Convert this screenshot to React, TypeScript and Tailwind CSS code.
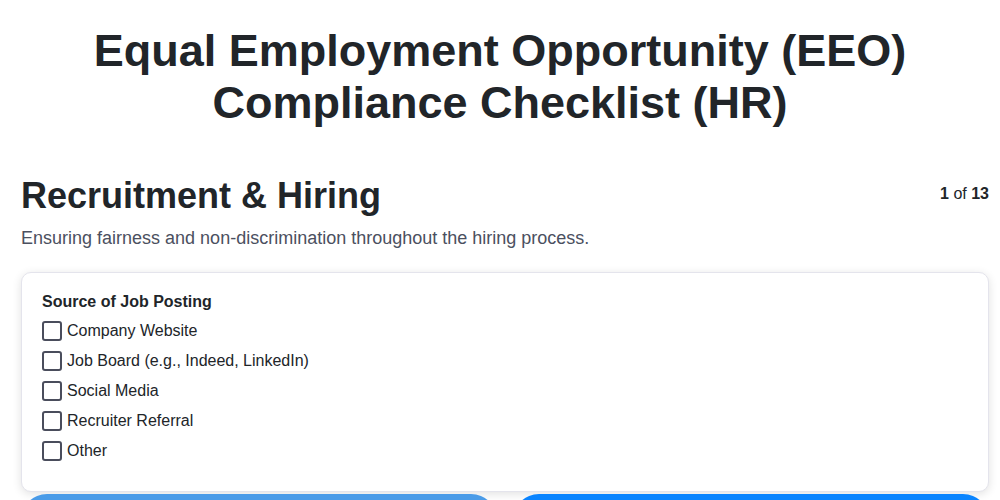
import { useState } from "react";

const sources = [
  "Company Website",
  "Job Board (e.g., Indeed, LinkedIn)",
  "Social Media",
  "Recruiter Referral",
  "Other",
];

export default function App() {
  const [checked, setChecked] = useState<string[]>([]);

  const toggle = (item: string) =>
    setChecked((prev) =>
      prev.includes(item) ? prev.filter((i) => i !== item) : [...prev, item]
    );

  return (
    <div className="h-screen overflow-hidden bg-white font-['Liberation_Sans',Arial,sans-serif] text-[#212529]">
      <h1 className="px-[21px] pt-[25px] text-center text-[45px] font-bold leading-[52px]">
        Equal Employment Opportunity (EEO)
        <br />
        Compliance Checklist (HR)
      </h1>

      <div className="pl-[21px] pr-[11px]">
        <div className="mt-[45px] flex items-start justify-between">
          <h2 className="text-[36px] font-bold leading-[44px]">Recruitment &amp; Hiring</h2>
          <p className="mt-[8px] text-[16px]">
            <span className="font-bold">1</span> of <span className="font-bold">13</span>
          </p>
        </div>
        <p className="mt-[8px] text-[18px] leading-[24px] text-[#4b5060]">
          Ensuring fairness and non-discrimination throughout the hiring process.
        </p>

        <div className="mt-[22px] rounded-[10px] border border-[#e4e4ec] bg-white px-[20px] pb-[30px] pt-[19px] shadow-[0_2px_10px_rgba(0,0,0,0.12)]">
          <p className="text-[16px] font-bold leading-[20px]">Source of Job Posting</p>
          <div className="mt-[9px] flex flex-col gap-[10px]">
            {sources.map((s) => (
              <label key={s} className="flex cursor-pointer items-center gap-[5px] text-[16px] leading-[20px]">
                <span
                  onClick={() => toggle(s)}
                  className={`flex h-[20px] w-[20px] items-center justify-center rounded-[3px] border-2 border-[#4a4d5c] ${
                    checked.includes(s) ? "bg-[#0a84ff]" : "bg-white"
                  }`}
                />
                <span>{s}</span>
              </label>
            ))}
          </div>
        </div>

        <div className="mt-[2px] flex gap-[16px]">
          <button className="h-[52px] flex-1 rounded-[28px] bg-[#4a9be8] text-white">Previous</button>
          <button className="h-[52px] flex-1 rounded-[28px] bg-[#0a84ff] text-white">Next</button>
        </div>
      </div>
    </div>
  );
}
